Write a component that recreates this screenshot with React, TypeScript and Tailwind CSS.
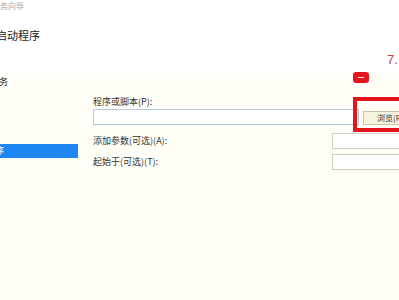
const font = "font-['Microsoft_YaHei','Noto_Sans_CJK_SC','Noto_Sans',sans-serif]"

function Field({ className = '' }: { className?: string }) {
  return <div className={`h-[16px] bg-white border ${className}`} />
}

export default function App() {
  return (
    <div className={`relative w-[399px] h-[300px] overflow-hidden bg-[#fffef6] ${font}`}>
      {/* wizard header */}
      <div className="h-[73px] bg-white overflow-hidden">
        <div className="-ml-[8px] pt-[1px] text-[8px] leading-[10px] text-[#a8a8a8]">任务向导</div>
        <div className="-ml-[4px] mt-[17px] text-[11px] leading-[14px] text-[#1a1a1a]">启动程序</div>
      </div>

      <div className="flex">
        {/* step list */}
        <div className="w-[78px] shrink-0 overflow-hidden">
          <div className="-ml-[1px] mt-[3px] text-[9px] leading-[12px] text-[#1a1a1a]">务</div>
          <div className="mt-[56px] h-[14px] bg-[#1e86f2] overflow-hidden">
            <div className="-ml-[32px] text-[9px] leading-[14px] text-white">启动程序</div>
          </div>
        </div>

        {/* form */}
        <div className="ml-[15px] flex-1 overflow-hidden">
          <div className="mt-[23px] text-[9px] leading-[12px] text-[#333]">程序或脚本(P):</div>
          <div className="mt-[1px] flex items-start gap-[4px]">
            <Field className="w-[266px] shrink-0 border-[#b3cade]" />
            <button className="mt-[2px] h-[14px] w-[70px] shrink-0 bg-[#f7f3dc] border border-[#c8c3ad] pl-[13px] text-left text-[8px] leading-[12px] text-[#333]">
              浏览(R)...
            </button>
          </div>
          <div className="mt-[8px] flex items-center">
            <div className="w-[239px] shrink-0 text-[9px] leading-[12px] text-[#333]">添加参数(可选)(A):</div>
            <Field className="w-[80px] shrink-0 border-[#d0ccbf]" />
          </div>
          <div className="mt-[5px] flex items-center">
            <div className="w-[239px] shrink-0 text-[9px] leading-[12px] text-[#333]">起始于(可选)(T):</div>
            <Field className="w-[80px] shrink-0 border-[#d0ccbf]" />
          </div>
        </div>
      </div>

      {/* annotations */}
      <div className="absolute left-[387px] top-[52px] text-[13px] leading-[16px] text-[#c0463c] font-['Liberation_Sans',sans-serif]">
        7.
      </div>
      <div className="absolute left-[353px] top-[72px] w-[16px] h-[11px] rounded-[3px] bg-[#e5151c] flex items-center justify-center">
        <div className="w-[6px] h-[1px] bg-white" />
      </div>
      <div className="absolute left-[353px] top-[97px] w-[60px] h-[35px] border-[4px] border-[#e3141b]" />
    </div>
  )
}
